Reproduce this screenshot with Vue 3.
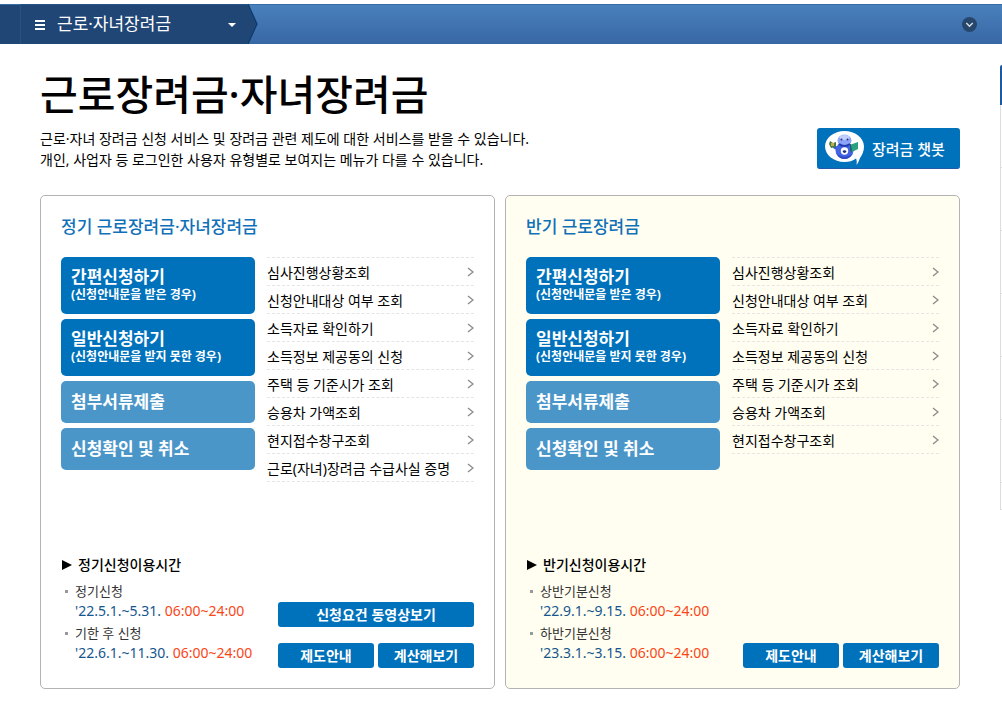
<script setup>
const actions = [
  { title: '간편신청하기', note: '(신청안내문을 받은 경우)' },
  { title: '일반신청하기', note: '(신청안내문을 받지 못한 경우)' },
  { title: '첨부서류제출' },
  { title: '신청확인 및 취소' },
]
const links = [
  '심사진행상황조회',
  '신청안내대상 여부 조회',
  '소득자료 확인하기',
  '소득정보 제공동의 신청',
  '주택 등 기준시가 조회',
  '승용차 가액조회',
  '현지접수창구조회',
]
const cards = [
  {
    id: 'regular',
    title: '정기 근로장려금·자녀장려금',
    links: [...links, '근로(자녀)장려금 수급사실 증명'],
    hoursTitle: '정기신청이용시간',
    hours: [
      { name: '정기신청', date: "'22.5.1.~5.31.", time: '06:00~24:00' },
      { name: '기한 후 신청', date: "'22.6.1.~11.30.", time: '06:00~24:00' },
    ],
    video: '신청요건 동영상보기',
  },
  {
    id: 'half',
    title: '반기 근로장려금',
    links,
    hoursTitle: '반기신청이용시간',
    hours: [
      { name: '상반기분신청', date: "'22.9.1.~9.15.", time: '06:00~24:00' },
      { name: '하반기분신청', date: "'23.3.1.~3.15.", time: '06:00~24:00' },
    ],
  },
]
</script>

<template>
  <div class="page">
    <header class="bar">
      <button class="menu" type="button">
        <svg class="burger" width="10" height="10" viewBox="0 0 10 10" aria-hidden="true">
          <path d="M0 0h10v2H0zM0 4h10v2H0zM0 8h10v2H0z" fill="#fff" />
        </svg>
        <span class="menu-label">근로·자녀장려금</span>
        <svg width="8" height="4" viewBox="0 0 8 4" aria-hidden="true">
          <path d="M0 0h8L4 4z" fill="#fff" />
        </svg>
      </button>
      <svg class="tip" width="11" height="40" viewBox="0 0 11 40" aria-hidden="true">
        <path d="M0 0L9 20L0 40z" fill="#1f4675" />
        <path d="M0 0L9 20L0 40" fill="none" stroke="#0f3c6b" stroke-width="1.3" />
      </svg>
      <button class="expand" type="button" aria-label="펼치기">
        <svg width="15" height="15" viewBox="0 0 15 15" aria-hidden="true">
          <circle cx="7.5" cy="7.5" r="7.5" fill="#27466c" />
          <path d="M4.3 6L7.5 9.2L10.7 6" fill="none" stroke="#d5e0dc" stroke-width="1.5" />
        </svg>
      </button>
    </header>

    <main class="content">
      <h1>근로장려금·자녀장려금</h1>
      <div class="intro">
        <p>
          근로·자녀 장려금 신청 서비스 및 장려금 관련 제도에 대한 서비스를 받을 수 있습니다.<br />
          개인, 사업자 등 로그인한 사용자 유형별로 보여지는 메뉴가 다를 수 있습니다.
        </p>
        <button class="chatbot" type="button">
          <svg width="39" height="34" viewBox="0 0 39 34" aria-hidden="true">
            <path d="M19.5 0C30 0 39 6.800 39 15.500C39 20.500 37 24 35 27C34 29.500 33.500 31.500 31.500 34C32 31 31.800 29 31 27.500C28 30 24 31 19.500 31C9 31 0 24 0 15.500S9 0 19.500 0z" fill="#fff" />
            <path d="M9 14L14 16.500L13 20L8 17z" fill="#3159d4" />
            <ellipse cx="19.500" cy="19.500" rx="9" ry="8.500" fill="#4264e3" />
            <path d="M12 23Q19.500 29 27 23Q25 28 19.500 28T12 23z" fill="#2f49c6" />
            <ellipse cx="19.500" cy="9.500" rx="7" ry="6" fill="#8ba4f7" />
            <ellipse cx="19.500" cy="6.500" rx="5" ry="2.500" fill="#c3d0ff" />
            <circle cx="16.500" cy="8.500" r="1" fill="#253576" />
            <circle cx="22.500" cy="8.500" r="1" fill="#253576" />
            <path d="M14 13Q19.500 17 25 13" fill="none" stroke="#2439ae" stroke-width="2" />
            <circle cx="19.500" cy="20" r="3.700" fill="#fff" />
            <path d="M17.500 20Q19.500 18.500 21.500 20Q21 22 19.500 22T17.500 20z" fill="#172b73" />
            <path d="M5 10L8 12L11 11V16L6 17L4 13z" fill="#3c7d50" />
            <path d="M6 12h3v3H6z" fill="#d6a641" />
            <path d="M26 13.500L33 11V18L27 21z" fill="#2aa083" />
            <path d="M26 13.500L27 21L25 19.500V13z" fill="#19655f" />
          </svg>
          <span>장려금 챗봇</span>
        </button>
      </div>

      <div class="cards">
        <section v-for="card in cards" :key="card.id" class="card" :class="card.id">
          <h2>{{ card.title }}</h2>
          <div class="services">
            <div class="actions">
              <button
                v-for="action in actions"
                :key="action.title"
                type="button"
                class="action"
                :class="{ light: !action.note }"
              >
                <strong>{{ action.title }}</strong>
                <small v-if="action.note">{{ action.note }}</small>
              </button>
            </div>
            <ul class="links">
              <li v-for="link in card.links" :key="link">
                <a href="#">
                  <span>{{ link }}</span>
                  <svg width="7" height="10" viewBox="0 0 7 10" aria-hidden="true">
                    <path d="M1 1L6 5L1 9" fill="none" stroke="#8c8c8c" stroke-width="1.4" />
                  </svg>
                </a>
              </li>
            </ul>
          </div>
          <div class="hours">
            <h3>
              <svg width="10" height="12" viewBox="0 0 10 12" aria-hidden="true">
                <path d="M0 1L10 6L0 11z" fill="#000" />
              </svg>
              {{ card.hoursTitle }}
            </h3>
            <div class="hours-row">
              <ul class="periods">
                <li v-for="period in card.hours" :key="period.name">
                  <span>{{ period.name }}</span>
                  <p class="date">{{ period.date }} <em>{{ period.time }}</em></p>
                </li>
              </ul>
              <div class="guides">
                <button v-if="card.video" class="wide" type="button">{{ card.video }}</button>
                <button type="button">제도안내</button>
                <button type="button">계산해보기</button>
              </div>
            </div>
          </div>
        </section>
      </div>
    </main>

    <aside class="quick" aria-hidden="true">
      <div class="quick-head"></div>
      <div v-for="n in 6" :key="n" class="quick-item"></div>
      <div class="quick-end"></div>
    </aside>
  </div>
</template>

<style>
body {
  background: #fff;
}
</style>

<style scoped>
.page {
  position: relative;
  padding-top: 4px;
  overflow: hidden;
  color: #000;
  font-family: "Noto Sans", "Noto Sans CJK KR", sans-serif;
  font-size: 14px;
}
h1, h2, h3, p, ul {
  margin: 0;
  padding: 0;
}
ul {
  list-style: none;
}
button {
  border: 0;
  padding: 0;
  color: #fff;
  font-family: inherit;
  cursor: pointer;
}
svg {
  display: block;
  flex: none;
}
.bar {
  display: flex;
  align-items: center;
  height: 40px;
  padding-left: 20px;
  background: linear-gradient(#4981bd, #3867a5);
  box-shadow: inset 0 1px #346da7, inset 20px 0 #1f4675;
}
.menu {
  display: flex;
  align-items: center;
  width: 228px;
  height: 40px;
  padding: 0 12px 0 14px;
  border-left: 1px solid #245289;
  border-top: 1px solid #245289;
  background: #1f4675;
  font-size: 17px;
  line-height: 24px;
}
.menu-label {
  flex: 1;
  padding: 0 0 2px 12px;
  text-align: left;
}
.expand {
  margin: 0 25px 0 auto;
  background: none;
}
.content {
  padding: 20px 42px 27px 40px;
}
h1 {
  margin-bottom: 4px;
  font-size: 41px;
  font-weight: 500;
  line-height: 60px;
}
.intro {
  display: flex;
  justify-content: space-between;
  align-items: flex-start;
  margin-bottom: 25px;
}
.intro p {
  line-height: 21px;
}
.chatbot {
  display: flex;
  align-items: center;
  gap: 8px;
  width: 143px;
  height: 41px;
  padding: 0 8px;
  border-radius: 3px;
  background: #0072bc;
  border-bottom: 1px solid #2459aa;
  font-size: 15px;
  font-weight: 500;
  white-space: nowrap;
}
.cards {
  display: grid;
  grid-template-columns: 1fr 1fr;
  gap: 10px;
}
.card {
  display: flex;
  flex-direction: column;
  padding: 18px 20px 20px;
  border: 1px solid #b3b3b3;
  border-radius: 5px;
}
.half {
  background: #fffef0;
}
h2 {
  margin-bottom: 17px;
  color: #1070b8;
  font-size: 17px;
  font-weight: 500;
  line-height: 26px;
}
.services {
  display: grid;
  grid-template-columns: 194fr 207fr;
  gap: 12px;
  align-items: start;
}
.actions {
  display: flex;
  flex-direction: column;
  gap: 5px;
}
.action {
  display: flex;
  flex-direction: column;
  justify-content: center;
  height: 57px;
  padding: 0 10px 2px;
  border-radius: 5px;
  background: #0072bc;
  text-align: left;
}
.light {
  height: 42px;
  padding-bottom: 0;
  background: #4b96c9;
}
.action strong {
  font-size: 17px;
  line-height: 20px;
}
.action small {
  font-size: 12px;
  font-weight: 700;
  line-height: 16px;
}
.links {
  border-top: 1px dashed #e5e5e5;
}
.links a {
  display: flex;
  align-items: center;
  justify-content: space-between;
  height: 27px;
  border-bottom: 1px dashed #e5e5e5;
  color: #000;
  text-decoration: none;
  white-space: nowrap;
}
.hours {
  margin-top: auto;
  padding-top: 73px;
}
h3 {
  display: flex;
  align-items: center;
  gap: 6px;
  padding-left: 1px;
  margin-bottom: 6px;
  font-size: 14px;
  font-weight: 500;
  line-height: 20px;
}
.hours-row {
  display: flex;
  align-items: flex-end;
  justify-content: space-between;
}
.periods {
  padding: 0 0 3px 4px;
}
.periods li {
  padding-left: 10px;
  margin-bottom: 2px;
  line-height: 20px;
  background: linear-gradient(#999, #999) 0 9px / 3px 3px no-repeat;
}
.periods span {
  display: block;
  color: #333;
  font-size: 13px;
}
.date {
  color: #15568f;
  white-space: nowrap;
}
.date em {
  color: #fa4616;
  font-style: normal;
}
.guides {
  display: grid;
  grid-template-columns: 96px 96px;
  gap: 16px 4px;
}
.guides button {
  height: 25px;
  border-radius: 3px;
  background: #0072bc;
  font-size: 14px;
  font-weight: 700;
  line-height: 25px;
}
.guides .wide {
  grid-column: span 2;
}
.quick {
  position: absolute;
  top: 65px;
  right: 0;
  width: 2px;
}
.quick-head {
  height: 40px;
  border-top-left-radius: 2px;
  background: #1d58a5;
}
.quick-item {
  height: 62px;
  border-left: 1px solid #ddd;
  border-bottom: 1px solid #ddd;
}
.quick-end {
  height: 26px;
  border-left: 1px solid #ddd;
  border-bottom: 1px solid #ddd;
}
</style>
